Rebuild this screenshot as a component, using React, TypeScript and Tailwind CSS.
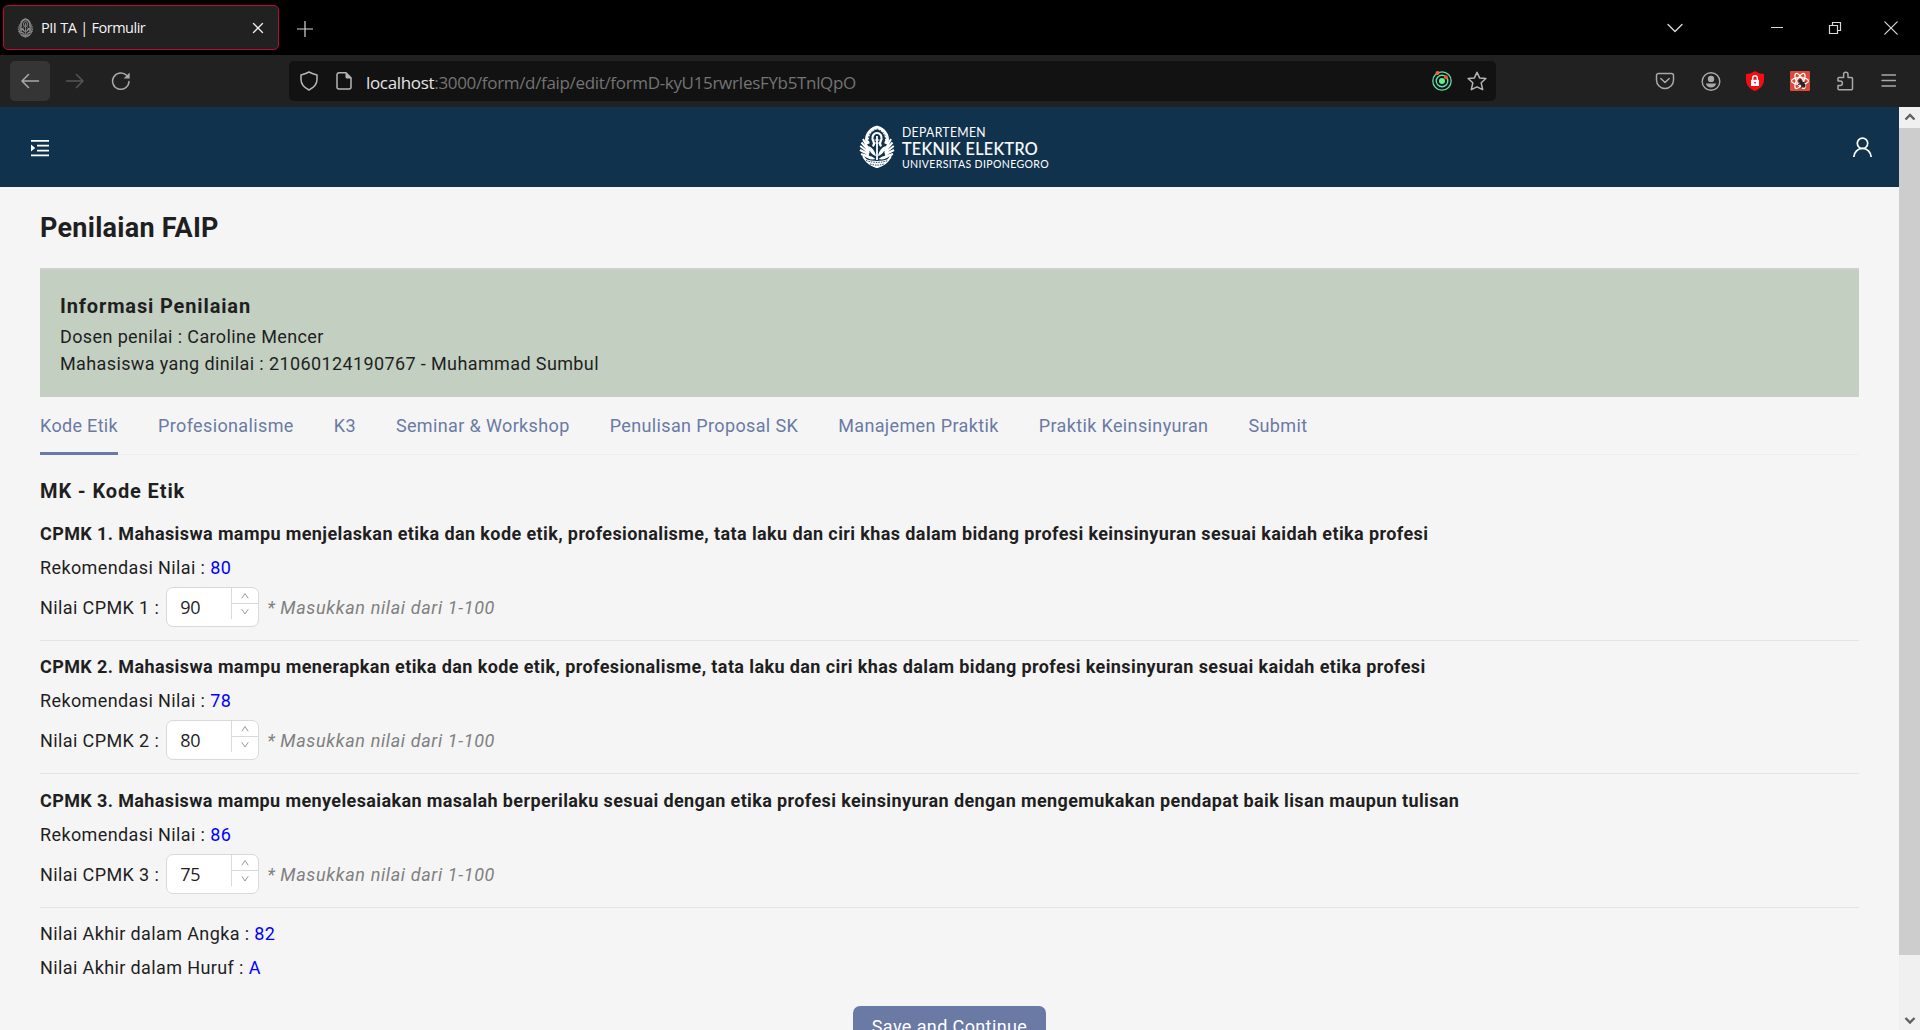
import type { ReactNode } from 'react';

const tabs = ['Kode Etik', 'Profesionalisme', 'K3', 'Seminar & Workshop', 'Penulisan Proposal SK', 'Manajemen Praktik', 'Praktik Keinsinyuran', 'Submit'];

const items = [
  { id: 1, rec: 80, value: 90, box: 'h-[135px] pt-[14px]', text: 'Mahasiswa mampu menjelaskan etika dan kode etik, profesionalisme, tata laku dan ciri khas dalam bidang profesi keinsinyuran sesuai kaidah etika profesi' },
  { id: 2, rec: 78, value: 80, box: 'h-[133px] pt-[12px]', text: 'Mahasiswa mampu menerapkan etika dan kode etik, profesionalisme, tata laku dan ciri khas dalam bidang profesi keinsinyuran sesuai kaidah etika profesi' },
  { id: 3, rec: 86, value: 75, box: 'h-[134px] pt-[13px]', text: 'Mahasiswa mampu menyelesaiakan masalah berperilaku sesuai dengan etika profesi keinsinyuran dengan mengemukakan pendapat baik lisan maupun tulisan' },
];

function Icon({ size = 20, className = '', children }: { size?: number; className?: string; children: ReactNode }) {
  return (
    <svg width={size} height={size} viewBox={`0 0 ${size} ${size}`} fill="none" stroke="currentColor" strokeWidth="1.5" strokeLinecap="round" strokeLinejoin="round" className={`shrink-0 ${className}`}>
      {children}
    </svg>
  );
}

/* University crest: an arch over a central figure, wings at both sides and a rounded base */
function Crest({ width, height, className = '', ground }: { width: number; height: number; className?: string; ground: string }) {
  return (
    <svg width={width} height={height} viewBox="0 0 36 44" className={`shrink-0 ${className}`}>
      <g fill="none" stroke="currentColor">
        <path d="M9 19C6 12 10 4.500 18 2.500 26 4.500 30 12 27 19" strokeWidth="3.800" />
        <path d="M9.500 16C8.500 10 12 6 18 4c6 2 9.500 6 8.500 12" stroke={ground} strokeWidth=".8" strokeDasharray="1.600 1.600" />
        <path d="M13.500 21c3.500-2 .500-4.500 0-7-.5-3.500 1.800-6 4.500-6s5 2.500 4.500 6c-.5 2.500-3.500 5 0 7" strokeWidth="2.200" />
        <path d="M18 11v24" strokeWidth="1.800" />
        <path d="M15.500 15h5M16 18h4" strokeWidth="1" />
        <path d="M4 14l6 11M2.500 17.500l8 9M1.200 21l9 7M1 25l9 4.500M2 29l8 2.500M32 14l-6 11M33.500 17.500l-8 9M34.800 21l-9 7M35 25l-9 4.500M34 29l-8 2.500" strokeWidth="2" />
        <path d="M4 29c0 5 4 9 14 13 10-4 14-8 14-13" strokeWidth="2" />
      </g>
      <g fill="currentColor">
        <path d="M17 31c-4-1-7-5-8-10 4 1 7 5 8 10zM19 31c4-1 7-5 8-10-4 1-7 5-8 10z" />
        <path d="M16.500 34c-4 1-8 0-11-3 4-1 8 0 11 3zM19.500 34c4 1 8 0 11-3-4-1-8 0-11 3z" />
        <path d="M6 34c8 2.500 16 2.500 24 0-1 4-5 7-12 9-7-2-11-5-12-9z" />
      </g>
      <path d="M7 35.500c7 2.500 15 2.500 22 0M11 39c5 1.500 9 1.500 14 0" fill="none" stroke={ground} strokeWidth=".9" strokeDasharray="1.500 1" />
    </svg>
  );
}

function TitleBar() {
  return (
    <div className="flex h-[55px] shrink-0 items-center bg-black text-[#d8d8d8]">
      <div className="ml-[3px] flex h-[45px] w-[276px] items-center rounded-[5px] border border-[#c00a35] bg-[#212121] pl-[13px]">
        <Crest width={17} height={20} ground="#212121" className="text-[#929292]" />
        <span className="mt-px ml-[7px] flex-1 font-['Open_Sans',sans-serif] text-[14.500px] tracking-[-0.500px] whitespace-nowrap text-[#f4f4f4] [word-spacing:0.6px]">PII TA | Formulir</span>
        <Icon size={12} className="mr-[14px] text-[#eee]"><path d="M1.500 1.500l9 9M10.500 1.500l-9 9" strokeWidth="1.300" /></Icon>
      </div>
      <Icon size={16} className="mt-[2px] ml-[18px]"><path d="M8 .5v15M.5 8h15" strokeWidth="1.200" /></Icon>
      <div className="flex-1" />
      <Icon size={16} className="mr-[88px]"><path d="M1 4.500l7 7 7-7" strokeWidth="1.400" /></Icon>
      <Icon size={12} className="mr-[45px]"><path d="M0 5.500h12" strokeWidth="1" /></Icon>
      <Icon size={14} className="mr-[42px]"><path d="M1.500 4.500h8v8h-8zM4.500 4v-2.500h8v8H10" strokeWidth="1.200" strokeLinejoin="miter" /></Icon>
      <Icon size={14} className="mr-[22px]"><path d="M.8.8l12.400 12.400M13.200.8L.8 13.200" strokeWidth="1.200" /></Icon>
    </div>
  );
}

function Toolbar() {
  return (
    <div className="flex h-[52px] shrink-0 items-center bg-[#212121] text-[#a9a9a9]">
      <div className="ml-[10px] flex size-10 items-center justify-center rounded-[5px] bg-[#353535]">
        <Icon><path d="M18.500 10H2M8.500 3.500L2 10l6.500 6.500" /></Icon>
      </div>
      <Icon className="ml-[15px] text-[#555]"><path d="M1.500 10H18M11.500 3.500L18 10l-6.500 6.500" /></Icon>
      <Icon className="ml-[26px]">
        <path d="M18 10.500A8.200 8.200 0 1 1 15.800 4.500" />
        <path d="M18.700 1.500v6h-6z" fill="currentColor" stroke="none" />
      </Icon>
      <div className="ml-[158px] flex h-10 w-[1207px] items-center rounded-[5px] bg-[#121212]">
        <Icon className="ml-[10px] text-[#b5b5b5]"><path d="M10 1c2.500 1.500 5 2.200 8 3v4.500c0 5-4 8.500-8 10.500-4-2-8-5.500-8-10.500V4c3-.8 5.500-1.500 8-3z" /></Icon>
        <Icon className="ml-[15px] text-[#b5b5b5]">
          <path d="M5 1.800h7l5 5V16a2 2 0 0 1-2 2H5a2 2 0 0 1-2-2V3.800a2 2 0 0 1 2-2z" />
          <path d="M11.500 1.500l6 6h-4.500a1.500 1.500 0 0 1-1.500-1.500z" fill="currentColor" stroke="none" />
        </Icon>
        <span className="mt-[3px] ml-[12px] flex-1 font-['Open_Sans',sans-serif] text-[17px] tracking-[-0.330px] whitespace-nowrap text-[#747474]">
          <span className="text-[#e4e4e4]">localhost</span>:3000/form/d/faip/edit/formD-kyU15rwrIesFYb5TnlQpO
        </span>
        <Icon className="mr-[15px]">
          <circle cx="10" cy="10" r="9.200" stroke="#62dba0" strokeWidth="1.300" />
          <circle cx="10" cy="10" r="5.800" stroke="#5ce0b4" strokeWidth="1.400" />
          <circle cx="10" cy="10" r="3" fill="#62f08c" stroke="none" />
          <circle cx="5.500" cy="2" r="2" fill="#f1682c" stroke="none" />
          <circle cx="14" cy="6.200" r="2" fill="#f1502c" stroke="none" />
        </Icon>
        <Icon className="mr-[9px] text-[#b5b5b5]"><path d="M10 1.200l2.600 5.700 6.300.6-4.700 4.300 1.500 6.800L10 15.800l-5.700 2.800 1.500-6.800L1.100 7.500l6.300-.6z" /></Icon>
      </div>
      <div className="flex-1" />
      <Icon className="mr-[26px]"><path d="M3.500 2.500h13a2 2 0 0 1 2 2V9a8.500 8.500 0 0 1-17 0V4.500a2 2 0 0 1 2-2z" /><path d="M5.800 7.500L10 11.500l4.200-4" /></Icon>
      <Icon className="mr-[24px]">
        <circle cx="10" cy="10.500" r="8.800" strokeWidth="1.400" />
        <circle cx="10" cy="7.900" r="3.200" fill="currentColor" stroke="none" />
        <path d="M4.800 12.500h10.400c-.7 2.500-2.700 4-5.200 4s-4.500-1.500-5.200-4z" fill="currentColor" stroke="none" />
      </Icon>
      <Icon className="mr-[25px]">
        <path d="M10 0c3 2 6 2.800 9 3v6c0 5-4 9-9 11-5-2-9-6-9-11V3c3-.2 6-1 9-3z" fill="#f40d12" stroke="none" />
        <rect x="6" y="8.800" width="8" height="6.200" fill="#fff" stroke="none" />
        <path d="M7.700 9V7a2.300 2.300 0 0 1 4.600 0v2" stroke="#fff" strokeWidth="1.400" />
        <circle cx="10" cy="11.700" r=".9" fill="#f40d12" stroke="none" />
      </Icon>
      <Icon className="mr-[26px]">
        <rect width="20" height="20" rx="1" fill="#dc4a3a" stroke="none" />
        <g stroke="#fff" strokeWidth="1.200">
          <ellipse cx="10" cy="10" rx="8.500" ry="3.300" />
          <ellipse cx="10" cy="10" rx="8.500" ry="3.300" transform="rotate(60 10 10)" />
          <ellipse cx="10" cy="10" rx="8.500" ry="3.300" transform="rotate(120 10 10)" />
        </g>
        <g stroke="#252525" strokeWidth="1.100">
          <path d="M8.500 13.500l2.500-1M11 16.800l1.500-2.300M15.500 11l-2.500.5M10 8l1.500 2M14.500 16l-.5-3" />
        </g>
        <ellipse cx="12.600" cy="13.200" rx="2" ry="3.400" transform="rotate(-42 12.600 13.200)" fill="#252525" stroke="none" />
        <circle cx="9.800" cy="10" r="1.500" fill="#252525" stroke="none" />
      </Icon>
      <Icon className="mr-[24px]"><path d="M3 18.800h12.500a1 1 0 0 0 1-1V7.500a1 1 0 0 0-1-1H12V3.500a2.200 2.200 0 0 0-4.400 0v3H3a1 1 0 0 0-1 1V10h2.200a2.200 2.200 0 0 1 0 4.400H2v3.400a1 1 0 0 0 1 1z" /></Icon>
      <Icon size={16} className="mr-[24px]"><path d="M2 2h13.500M2 7.500h13.500M2 13h13.500" strokeWidth="1.400" /></Icon>
    </div>
  );
}

function AppHeader() {
  return (
    <header className="grid h-20 shrink-0 grid-cols-3 items-center bg-[#11324d] px-[26px] text-white">
      <svg width="18" height="17" viewBox="0 0 18 17" fill="#fff" className="mt-[2px] ml-[5px]">
        <path d="M0 0h18v1.700H0zM6 4.800h12v1.700H6zM6 9.700h12v1.700H6zM0 14.500h18v1.700H0zM0 4.600l4.200 3.500L0 11.600z" />
      </svg>
      <div className="flex items-center justify-center pl-[20px]">
        <Crest width={36} height={44} ground="#11324d" />
        <svg width="158" height="56" viewBox="0 -4 158 56" fill="#fff" className="ml-[6px] font-['Lato',sans-serif]">
          <text x="1" y="13.500" fontSize="13.500" textLength="84" lengthAdjust="spacingAndGlyphs">DEPARTEMEN</text>
          <text x="1" y="31.500" fontSize="17" textLength="136" lengthAdjust="spacingAndGlyphs" stroke="#fff" strokeWidth=".2">TEKNIK ELEKTRO</text>
          <text x="1" y="44.500" fontSize="11.500" textLength="147" lengthAdjust="spacingAndGlyphs">UNIVERSITAS DIPONEGORO</text>
        </svg>
      </div>
      <Icon className="justify-self-end">
        <circle cx="9.500" cy="6.300" r="5.200" strokeWidth="1.700" />
        <path d="M.8 20c.4-5 4-8.600 8.700-8.600s8.300 3.600 8.700 8.600" strokeWidth="1.700" />
      </Icon>
    </header>
  );
}

function NumberInput({ value }: { value: number }) {
  return (
    <div className="ml-[7px] flex h-10 w-[93px] items-start overflow-hidden rounded-[7px] border border-[#d9d9d9] bg-white">
      <span className="w-[64px] pl-[13px] font-['Open_Sans',sans-serif] text-[18px] leading-[39px] tracking-[-0.300px] text-[#1f1f1f]">{value}</span>
      <div className="flex h-[31px] flex-1 flex-col border-l border-[#d9d9d9] text-[#8c8c8c]">
        <div className="flex h-4 items-center justify-center border-b border-[#d9d9d9]">
          <Icon size={8}><path d="M1 6l3-4.500L7 6" strokeWidth=".9" /></Icon>
        </div>
        <div className="flex flex-1 items-center justify-center">
          <Icon size={8}><path d="M1 1.500L4 6l3-4.500" strokeWidth=".9" /></Icon>
        </div>
      </div>
    </div>
  );
}

function Scrollbar() {
  return (
    <div className="flex w-[21px] shrink-0 flex-col bg-[#f0f0f0] text-[#606060]">
      <div className="flex h-[21px] items-center justify-center"><Icon size={12}><path d="M1.500 7.500L6 3l4.500 4.500" strokeWidth="2.400" strokeLinecap="butt" strokeLinejoin="miter" /></Icon></div>
      <div className="h-[827px] bg-[#cdcdcd]" />
      <div className="flex-1" />
      <div className="flex h-[21px] items-center justify-center"><Icon size={12}><path d="M1.500 4L6 8.500 10.500 4" strokeWidth="2.400" strokeLinecap="butt" strokeLinejoin="miter" /></Icon></div>
    </div>
  );
}

export default function App() {
  return (
    <div className="flex h-[1030px] w-[1920px] flex-col overflow-hidden bg-[#f5f5f5]">
      <TitleBar />
      <Toolbar />
      <div className="flex min-h-0 flex-1">
        <div className="flex min-w-0 flex-1 flex-col overflow-hidden font-['Roboto',sans-serif] text-[18px] leading-[27px] tracking-[0.385px] text-[#1f1f1f]">
          <AppHeader />
          <main className="flex flex-col px-10">
            <h1 className="mt-[21px] text-[27px] leading-[40px] font-bold tracking-[0.270px]">Penilaian FAIP</h1>
            <section className="mt-[20px] h-[129px] border-t-2 border-[#cfcfcf] bg-[#c2cfc1] px-5 pt-[21px]">
              <h2 className="text-[20px] leading-[30px] font-bold tracking-[0.860px]">Informasi Penilaian</h2>
              <p className="mt-[2px]">Dosen penilai : Caroline Mencer</p>
              <p>Mahasiswa yang dinilai : 21060124190767 - Muhammad Sumbul</p>
            </section>
            <nav className="flex h-[58px] gap-10 border-b border-[#eeeeee] text-[#6b7aa5]">
              {tabs.map((t, i) => (
                <div key={t} className={i === 0 ? 'h-[58px] border-b-[3px] border-[#6b7aa5] pt-[15px] font-[450] tracking-[0.320px]' : 'pt-[15px] tracking-[0.370px]'}>{t}</div>
              ))}
            </nav>
            <h2 className="mt-[21px] text-[20px] leading-[30px] font-bold tracking-[0.880px]">MK - Kode Etik</h2>
            {items.map((it) => (
              <section key={it.id} className={`border-b border-[#e4e4e4] whitespace-nowrap ${it.box}`}>
                <h3 className={it.id === 3 ? 'font-bold tracking-[0.380px]' : 'font-bold tracking-[0.395px]'}>CPMK {it.id}. {it.text}</h3>
                <p className="mt-[7px]">Rekomendasi Nilai : <span className="text-[#0000ff]">{it.rec}</span></p>
                <div className="mt-[6px] flex items-center">
                  <span>Nilai CPMK {it.id} :</span>
                  <NumberInput value={it.value} />
                  <em className="ml-2 tracking-[0.630px] text-[#808080]">* Masukkan nilai dari 1-100</em>
                </div>
              </section>
            ))}
            <p className="mt-[12px]">Nilai Akhir dalam Angka : <span className="text-[#0000ff]">82</span></p>
            <p className="mt-[7px]">Nilai Akhir dalam Huruf : <span className="text-[#0000ff]">A</span></p>
            <button className="mt-[25px] h-10 w-[193px] shrink-0 self-center rounded-[7px] bg-[#6b7aa5] text-white">Save and Continue</button>
          </main>
        </div>
        <Scrollbar />
      </div>
    </div>
  );
}
